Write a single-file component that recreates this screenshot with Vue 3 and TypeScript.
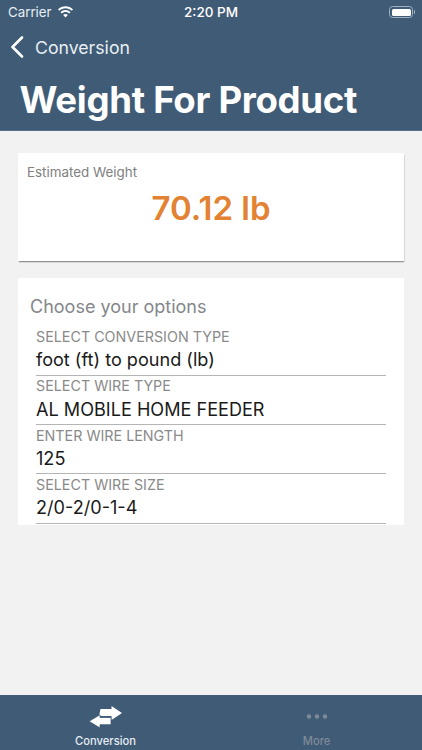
<script setup lang="ts">
interface Field { label: string; value: string }
const fields: Field[] = [
  { label: 'SELECT CONVERSION TYPE', value: 'foot (ft) to pound (lb)' },
  { label: 'SELECT WIRE TYPE', value: 'AL MOBILE HOME FEEDER' },
  { label: 'ENTER WIRE LENGTH', value: '125' },
  { label: 'SELECT WIRE SIZE', value: '2/0-2/0-1-4' },
]
</script>

<template>
  <div class="screen">
    <header class="header">
      <div class="status">
        <div class="status-left">
          <span class="carrier">Carrier</span>
          <svg class="wifi" width="17" height="12" viewBox="0 0 17 12">
            <path d="M8.5 2.2c2.4 0 4.6.9 6.3 2.5l1.2-1.3C14 1.4 11.400.3 8.500.3S3 1.400 1 3.400l1.200 1.300C3.900 3.100 6.100 2.200 8.500 2.200z" fill="#fff" />
            <path d="M8.500 6c1.400 0 2.700.5 3.700 1.500l1.300-1.300C12.100 4.900 10.400 4.100 8.500 4.100s-3.600.8-5 2.100l1.300 1.300C5.800 6.500 7.100 6 8.500 6z" fill="#fff" />
            <path d="M8.500 8c-.9 0-1.700.3-2.300.9l2.300 2.500 2.300-2.500C10.200 8.300 9.400 8 8.500 8z" fill="#fff" />
          </svg>
        </div>
        <span class="time">2:20 PM</span>
        <div class="battery"><span class="battery-fill"></span></div>
      </div>
      <div class="nav">
        <svg class="chevron" width="14" height="22" viewBox="0 0 14 22">
          <path d="M12 1.500 2.500 11l9.500 9.500" fill="none" stroke="#fff" stroke-width="2.600" stroke-linecap="round" stroke-linejoin="round" />
        </svg>
        <span class="back">Conversion</span>
      </div>
      <h1 class="title">Weight For Product</h1>
    </header>

    <main class="content">
      <section class="card result">
        <div class="result-label">Estimated Weight</div>
        <div class="result-value">70.12 lb</div>
      </section>

      <section class="card options">
        <h2 class="options-title">Choose your options</h2>
        <div v-for="f in fields" :key="f.label" class="field">
          <div class="field-label">{{ f.label }}</div>
          <div class="field-value">{{ f.value }}</div>
        </div>
      </section>
    </main>

    <nav class="tabs">
      <div class="tab active">
        <svg class="tab-icon" width="34" height="22" viewBox="0 0 34 22">
          <path d="M11.500 3H22.500V0L33 7 22.500 14V10H10z" fill="#fff" />
          <path d="M22 11.500H11V8.700L0 15.300 11 22V18.700H22z" fill="#fff" stroke="#3f5b76" stroke-width="0.800" />
        </svg>
        <span class="tab-label">Conversion</span>
      </div>
      <div class="tab">
        <svg class="tab-icon" width="34" height="22" viewBox="0 0 34 22">
          <circle cx="9" cy="10.500" r="2.200" fill="#7f8a98" />
          <circle cx="17" cy="10.500" r="2.200" fill="#7f8a98" />
          <circle cx="25" cy="10.500" r="2.200" fill="#7f8a98" />
        </svg>
        <span class="tab-label">More</span>
      </div>
    </nav>
  </div>
</template>

<style>
html, body { margin: 0; padding: 0; background: #f2f2f2; }
</style>

<style scoped>
.screen {
  width: 422px;
  height: 750px;
  display: flex;
  flex-direction: column;
  overflow: hidden;
  background: #f2f2f2;
  font-family: Inter, "Liberation Sans", sans-serif;
}
.header {
  background: #3f5b76;
  color: #fff;
  height: 131px;
  box-sizing: border-box;
  border-bottom: 1px solid #56708a;
  flex: none;
}
.status {
  height: 24px;
  display: flex;
  align-items: center;
  justify-content: space-between;
  padding: 0 7px 0 8px;
  position: relative;
}
.status-left { display: flex; align-items: center; gap: 5px; }
.carrier { font-size: 13.300px; color: #e8edf2; }
.wifi { display: block; }
.time {
  position: absolute;
  left: 0;
  right: 0;
  text-align: center;
  font-size: 13.500px;
  font-weight: 500;
}
.battery {
  width: 24px;
  height: 12px;
  box-sizing: border-box;
  border: 1px solid #9fb0c1;
  border-radius: 3.500px;
  padding: 1.500px;
  margin-right: 2px;
  position: relative;
}
.battery::after {
  content: "";
  position: absolute;
  right: -3px;
  top: 3px;
  width: 1.500px;
  height: 4px;
  background: #9fb0c1;
  border-radius: 0 1px 1px 0;
}
.battery-fill { display: block; height: 100%; background: #fff; border-radius: 1.500px; }
.nav {
  display: flex;
  align-items: center;
  height: 24px;
  margin-top: 11px;
  padding-left: 10px;
}
.chevron { display: block; }
.back { margin-left: 11px; font-size: 17.700px; color: #e9eef3; }
.title {
  margin: 19px 0 0 19.500px;
  font-size: 36.600px;
  line-height: 44px;
  font-weight: 700;
  letter-spacing: -0.300px;
  white-space: nowrap;
}
.content {
  flex: 1;
  padding: 22px 18px 0;
  display: flex;
  flex-direction: column;
  gap: 17px;
}
.card { background: #fff; }
.result {
  height: 108px;
  box-sizing: border-box;
  padding: 10.500px 9px 0;
  box-shadow: 0 1.500px 1.200px -0.500px rgba(0, 0, 0, 0.5);
}
.result-label { font-size: 13.400px; line-height: 16px; color: #808080; }
.result-value {
  margin-top: 8.500px;
  text-align: center;
  font-size: 33px;
  line-height: 40px;
  font-weight: 600;
  color: #e38233;
}
.options {
  height: 247px;
  box-sizing: border-box;
  padding: 17px 18px 0 18px;
}
.options-title {
  margin: 0 0 8.400px -6px;
  font-size: 18px;
  line-height: 23px;
  font-weight: 400;
  color: #84878b;
}
.field {
  height: 49.330px;
  box-sizing: border-box;
  border-bottom: 1px solid #b5b5b5;
}
.field-label {
  font-size: 14.300px;
  line-height: 16px;
  color: #8a8a8a;
  padding-top: 2.500px;
}
.field-value {
  font-size: 18.100px;
  line-height: 24px;
  margin-top: 2.500px;
  color: #1a1a1a;
}
.tabs {
  height: 55px;
  flex: none;
  background: #3f5b76;
  display: grid;
  grid-template-columns: 1fr 1fr;
}
.tab {
  display: flex;
  flex-direction: column;
  align-items: center;
  padding-top: 11px;
  color: #7f8a98;
}
.tab.active { color: #e6ecf2; }
.tab-icon { display: block; }
.tab-label {
  margin-top: 6px;
  font-size: 11.200px;
  line-height: 14px;
  font-weight: 500;
}
</style>
